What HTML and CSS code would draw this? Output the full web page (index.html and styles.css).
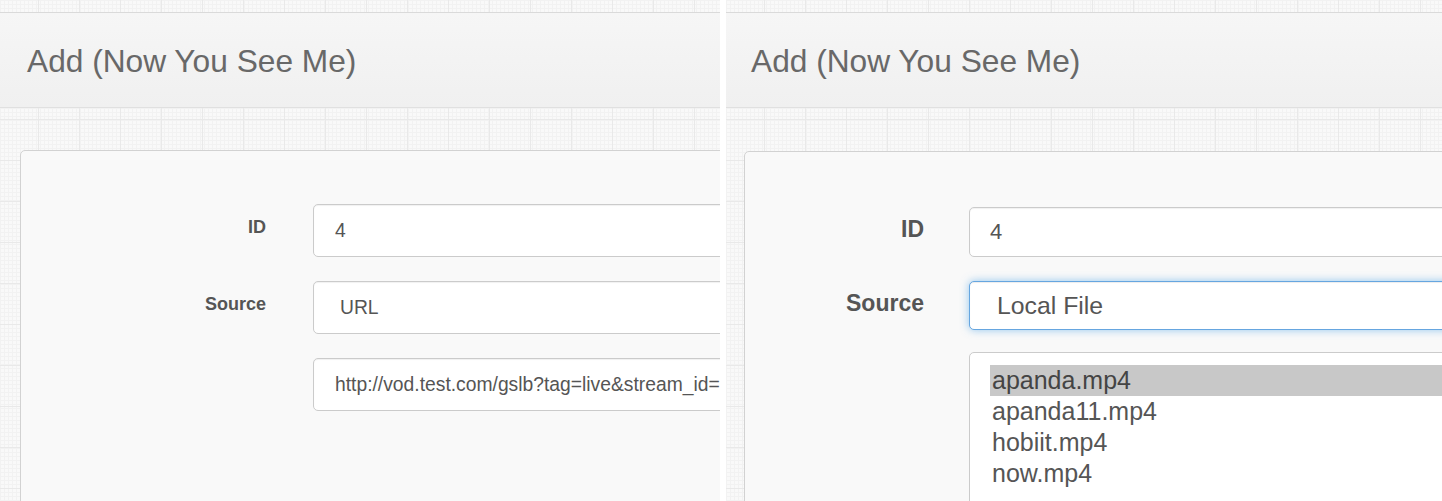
FILE: index.html
```
<!DOCTYPE html>
<html lang="en">
<head>
  <meta charset="UTF-8">
  <title>Add (Now You See Me)</title>
  <link rel="stylesheet" href="styles.css">
</head>
<body>
  <div class="shots">
    <!-- source = URL -->
    <section class="shot shot-url">
      <div class="strip"></div>
      <header class="page-head"><h1>Add (Now You See Me)</h1></header>
      <div class="workspace">
        <div class="card">
          <div class="row">
            <label class="label">ID</label>
            <div class="field">4</div>
          </div>
          <div class="row">
            <label class="label">Source</label>
            <div class="field select">URL</div>
          </div>
          <div class="row">
            <span class="label"></span>
            <div class="field">http://vod.test.com/gslb?tag=live&amp;stream_id=</div>
          </div>
        </div>
      </div>
    </section>

    <!-- source = Local File -->
    <section class="shot shot-local">
      <div class="strip"></div>
      <header class="page-head"><h1>Add (Now You See Me)</h1></header>
      <div class="workspace">
        <div class="card">
          <div class="row">
            <label class="label">ID</label>
            <div class="field">4</div>
          </div>
          <div class="row">
            <label class="label">Source</label>
            <div class="field select focus">Local File</div>
          </div>
          <div class="row">
            <span class="label"></span>
            <div class="listbox">
              <div class="option selected">apanda.mp4</div>
              <div class="option">apanda11.mp4</div>
              <div class="option">hobiit.mp4</div>
              <div class="option">now.mp4</div>
            </div>
          </div>
        </div>
      </div>
    </section>
  </div>
</body>
</html>
```

FILE: styles.css
```
body {
  margin: 0;
  background: #fff;
  font-family: 'Liberation Sans', Arial, sans-serif;
  color: #555;
}

.shots {
  display: flex;
  gap: 6px;
  height: 501px;
  overflow: hidden;
}

.shot {
  flex: none;
  width: 720px;
  height: 501px;
  overflow: hidden;
  background-color: #f9f9f9;
  background-image:
    linear-gradient(90deg, #e9e9e9 1px, transparent 1px),
    linear-gradient(#e9e9e9 1px, transparent 1px),
    linear-gradient(90deg, #f2f2f2 1px, transparent 1px),
    linear-gradient(#f2f2f2 1px, transparent 1px);
  background-size: 41px 41px, 41px 41px, 4px 4px, 4px 4px;
  background-position: -3px -4px, -3px -4px, 0 0, 0 0;
}

.shot-local {
  width: 716px;
}

.strip {
  height: 12px;
}

/* Page header */
.page-head {
  height: 94px;
  display: flex;
  align-items: center;
  padding-left: 27px;
  background: linear-gradient(#f6f6f6, #f0f0f0);
  border-top: 1px solid #dadada;
  border-bottom: 1px solid #e0e0e0;
}

.shot-local .page-head {
  padding-left: 25px;
}

.page-head h1 {
  margin: 2px 0 0;
  font-size: 31.7px;
  font-weight: normal;
  color: #686868;
}

.workspace {
  padding: 42px 0 0 20px;
}

.shot-local .workspace {
  padding: 43px 0 0 18px;
}

.card {
  width: 1000px;
  height: 500px;
  padding-top: 53px;
  background: #f9f9f9;
  border: 1px solid #d2d2d2;
  border-radius: 5px;
}

.shot-local .card {
  padding-top: 55px;
}

/* Form rows */
.row {
  display: flex;
  align-items: flex-start;
  gap: 47px;
  margin-bottom: 24px;
}

.label {
  flex: none;
  width: 245px;
  padding-top: 13px;
  text-align: right;
  font-size: 18px;
  line-height: 20px;
  font-weight: bold;
  color: #555;
}

.field {
  box-sizing: border-box;
  width: 700px;
  height: 53px;
  padding-left: 21px;
  display: flex;
  align-items: center;
  background: #fff;
  border: 1px solid #cbcbcb;
  border-radius: 5px;
  box-shadow: inset 0 1px 1px rgba(0, 0, 0, 0.06);
  font-size: 19.3px;
  color: #555;
  white-space: nowrap;
}

.field.select {
  padding-left: 26px;
}

/* right shot is shown a bit larger */
.shot-local .row {
  gap: 45px;
  margin-bottom: 24px;
}

.shot-local .row:nth-child(2) {
  margin-bottom: 22px;
}

.shot-local .label {
  width: 179px;
  padding-top: 9px;
  font-size: 23px;
  line-height: 26px;
}

.shot-local .field {
  height: 50px;
  padding-left: 20px;
  font-size: 22px;
}

.shot-local .field.select {
  height: 49px;
  padding-left: 27px;
  font-size: 24.8px;
}

.field.focus {
  border-color: #66a6e0;
  box-shadow: inset 0 1px 1px rgba(0, 0, 0, 0.075), 0 0 8px rgba(102, 175, 233, 0.7);
}

.listbox {
  box-sizing: border-box;
  width: 700px;
  height: 200px;
  padding: 12px 0 0 20px;
  background: #fff;
  border: 1px solid #cbcbcb;
  border-radius: 5px;
  font-size: 25px;
  line-height: 31px;
  color: #555;
}

.option {
  padding-left: 2px;
}

.option.selected {
  background: #c8c8c8;
  color: #444;
}
```
